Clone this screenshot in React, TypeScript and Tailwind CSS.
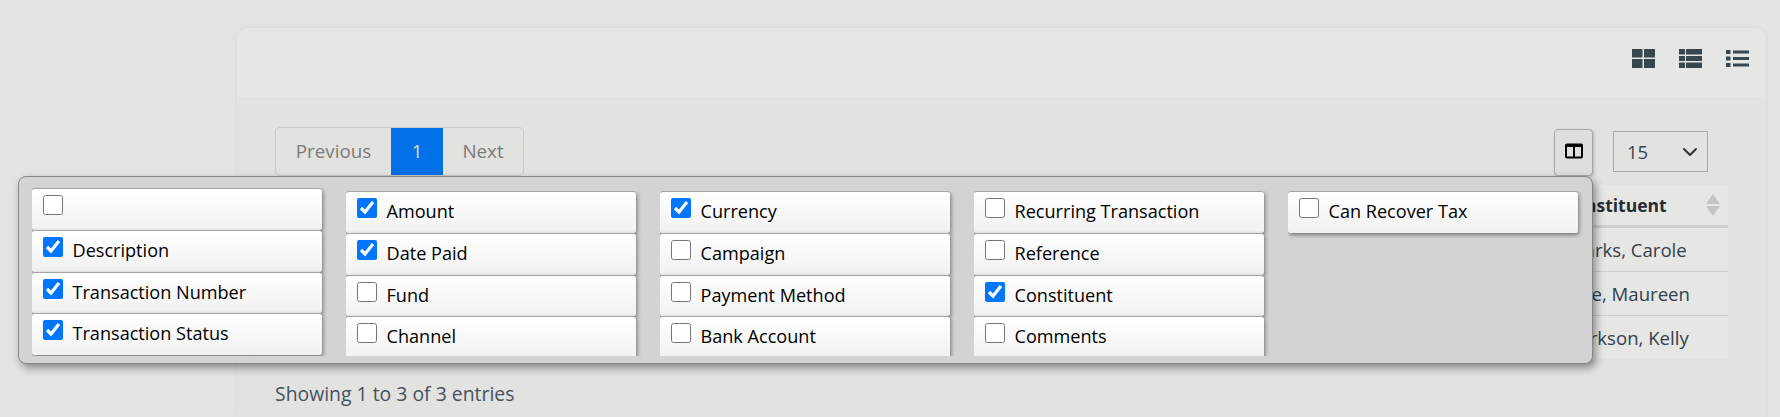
import { ChevronDown } from "lucide-react";

const columns: { label: string; checked: boolean }[][] = [
  [
    { label: "", checked: false },
    { label: "Description", checked: true },
    { label: "Transaction Number", checked: true },
    { label: "Transaction Status", checked: true },
  ],
  [
    { label: "Amount", checked: true },
    { label: "Date Paid", checked: true },
    { label: "Fund", checked: false },
    { label: "Channel", checked: false },
  ],
  [
    { label: "Currency", checked: true },
    { label: "Campaign", checked: false },
    { label: "Payment Method", checked: false },
    { label: "Bank Account", checked: false },
  ],
  [
    { label: "Recurring Transaction", checked: false },
    { label: "Reference", checked: false },
    { label: "Constituent", checked: true },
    { label: "Comments", checked: false },
  ],
  [{ label: "Can Recover Tax", checked: false }],
];

const rows = ["Sparks, Carole", "Dale, Maureen", "Clarkson, Kelly"];

function GridIcon() {
  return (
    <svg width="23" height="19" viewBox="0 0 23 19" fill="#37474f">
      <rect x="0" y="0" width="10.5" height="8.5" />
      <rect x="12" y="0" width="11" height="8.5" />
      <rect x="0" y="10" width="10.5" height="9" />
      <rect x="12" y="10" width="11" height="9" />
    </svg>
  );
}

function TableIcon() {
  return (
    <svg width="23" height="19" viewBox="0 0 23 19" fill="#37474f">
      <rect x="0" y="0" width="6" height="5.5" />
      <rect x="7" y="0" width="16" height="5.5" />
      <rect x="0" y="7" width="6" height="5" />
      <rect x="7" y="7" width="16" height="5" />
      <rect x="0" y="13.5" width="6" height="5.5" />
      <rect x="7" y="13.5" width="16" height="5.5" />
    </svg>
  );
}

function ListIcon() {
  return (
    <svg width="23" height="19" viewBox="0 0 23 19" fill="#37474f">
      <rect x="0" y="1" width="4.5" height="4" />
      <rect x="7" y="1.5" width="16" height="3" />
      <rect x="0" y="7.5" width="4.5" height="4" />
      <rect x="7" y="8" width="16" height="3" />
      <rect x="0" y="14" width="4.5" height="4" />
      <rect x="7" y="14.5" width="16" height="3" />
    </svg>
  );
}

function ColumnsIcon() {
  return (
    <svg width="18" height="16" viewBox="0 0 18 16" fill="none" stroke="#000" strokeWidth="2">
      <rect x="1" y="1.5" width="16" height="13" rx="1" />
      <line x1="9" y1="2" x2="9" y2="14" />
      <line x1="1" y1="3" x2="17" y2="3" strokeWidth="2" />
    </svg>
  );
}

function ColumnItem({ label, checked }: { label: string; checked: boolean }) {
  return (
    <label className="flex h-[41.8px] w-[290px] shrink-0 items-start gap-[9.5px] rounded-[3px] border-t border-[#a5a5a5] bg-gradient-to-b from-white to-[#f1f1f1] pl-[11px] pt-[6px] text-[18.1px] text-black shadow-[1px_2px_4px_rgba(0,0,0,0.45)]">
      <input type="checkbox" defaultChecked={checked} className="m-0 h-5 w-5 shrink-0" />
      <span className="leading-[27px]">{label}</span>
    </label>
  );
}

export default function App() {
  return (
    <div className="relative h-[417px] w-[1780px] overflow-hidden bg-[#e3e3e1] pl-[237px] pr-[14px] pt-[28px] font-['Open_Sans',sans-serif]">
      <div className="h-[389px] rounded-t-xl bg-[#e2e2e1] shadow-[0_0_4px_rgba(0,0,0,0.06)]">
        <div className="flex h-[69px] items-start justify-end gap-6 rounded-t-xl bg-[#e6e6e5] pr-[17px] pt-[21px]">
          <GridIcon />
          <TableIcon />
          <ListIcon />
        </div>
        <div className="px-[38px]">
          <div className="mt-[30px] flex h-[49px] items-start justify-between">
            <div className="flex h-[49px] rounded-[5px] border border-[#c9c9c8] text-[18.8px] text-[#7b7b79]">
              <span className="flex w-[115px] items-center justify-center">Previous</span>
              <span className="flex w-[52px] items-center justify-center bg-[#0071e6] text-[#dcdcdc]">1</span>
              <span className="flex w-[80px] items-center justify-center">Next</span>
            </div>
            <div className="mr-[20px] flex items-start gap-5">
              <button className="mt-[2px] flex h-[47px] w-[39px] items-start justify-center rounded-[4px] border border-[#a9a9a8] bg-[#dededd] pt-[13px] shadow-[1px_1px_3px_rgba(0,0,0,0.2)]">
                <ColumnsIcon />
              </button>
              <div className="mt-[4px] flex h-[41px] w-[95px] items-center justify-between border border-[#a8a8a8] pl-[13px] pr-[5px] text-[18.5px] text-[#3b4650]">
                <span>15</span>
                <ChevronDown size={24} strokeWidth={2} className="text-[#2e3338]" />
              </div>
            </div>
          </div>
          <div className="mt-[9px] flex h-[174px] w-[1453px] flex-col bg-[#e6e6e5]">
            <div className="flex h-[43px] shrink-0 items-center border-b-[3px] border-[#cdcdcc] pl-[1288px] pr-[8px]">
              <span className="text-[17.5px] font-bold text-[#262b30]">Constituent</span>
              <div className="ml-auto flex flex-col gap-[2px]">
                <div className="h-0 w-0 border-x-[7px] border-b-[10px] border-x-transparent border-b-[#c4c4c4]" />
                <div className="h-0 w-0 border-x-[7px] border-t-[10px] border-x-transparent border-t-[#c4c4c4]" />
              </div>
            </div>
            {rows.map((name) => (
              <div
                key={name}
                className="flex h-[44px] shrink-0 items-center border-b border-[#cdcdcc] pl-[1288px] text-[18.6px] text-[#33404d] last:border-b-0"
              >
                {name}
              </div>
            ))}
          </div>
          <p className="mt-[20px] text-[19.4px] text-[#47525d]">Showing 1 to 3 of 3 entries</p>
        </div>
      </div>

      <div className="absolute left-[18px] top-[176px] flex h-[188px] w-[1575px] gap-[18.5px] rounded-lg border border-[#868686] bg-[#d3d3d3] pl-[13px] pt-[11px] shadow-[3px_4px_8px_rgba(0,0,0,0.4)]">
        {columns.map((items, i) => (
          <div
            key={i}
            className={
              i === 0
                ? "flex h-[168px] w-[295.5px] flex-col overflow-hidden"
                : "mt-[3px] flex h-[165px] w-[295.5px] flex-col overflow-hidden"
            }
          >
            {items.map((item) => (
              <ColumnItem key={item.label} label={item.label} checked={item.checked} />
            ))}
          </div>
        ))}
      </div>
    </div>
  );
}
